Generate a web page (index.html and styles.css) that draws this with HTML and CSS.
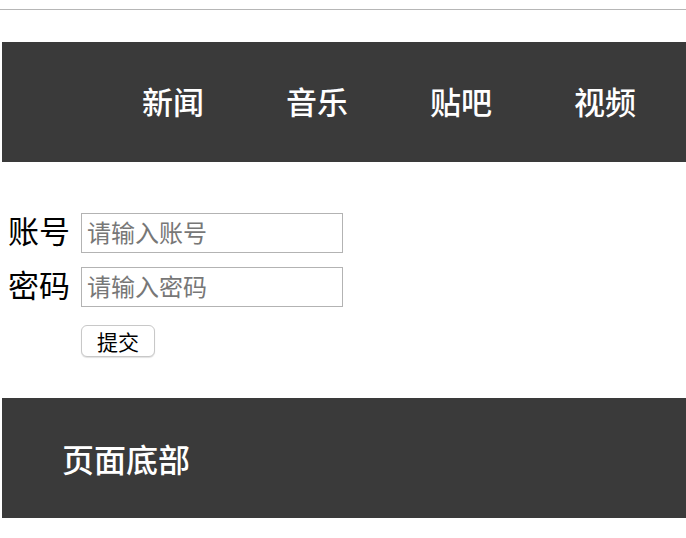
FILE: index.html
```html
<!DOCTYPE html>
<html lang="zh">
<head>
<meta charset="utf-8">
<title>页面</title>
<link rel="stylesheet" href="styles.css">
</head>
<body>
<div class="rule"></div>
<header class="header">
  <ul class="nav">
    <li class="nav-item">新闻</li>
    <li class="nav-item">音乐</li>
    <li class="nav-item">贴吧</li>
    <li class="nav-item">视频</li>
  </ul>
</header>
<form class="form">
  <div class="row">
    <label class="label">账号</label>
    <input class="field" type="text" placeholder="请输入账号">
  </div>
  <div class="row">
    <label class="label">密码</label>
    <input class="field" type="password" placeholder="请输入密码">
  </div>
  <div class="row actions">
    <button class="submit" type="button">提交</button>
  </div>
</form>
<footer class="footer">页面底部</footer>
</body>
</html>
```
FILE: styles.css
```css
* { box-sizing: border-box; }
html, body {
  margin: 0;
  padding: 0;
  background: #fff;
  font-family: "Noto Sans CJK SC", "Noto Sans", sans-serif;
  overflow: hidden;
}
.rule {
  margin-top: 9px;
  height: 1px;
  background: #b6b6b6;
}
.header {
  margin: 32px 0 0 2px;
  height: 120px;
  background: #3a3a3a;
  display: flex;
  align-items: center;
}
.nav {
  list-style: none;
  margin: 0;
  padding: 0 0 2px 99px;
  display: flex;
}
.nav-item {
  width: 144px;
  text-align: center;
  color: #fff;
  font-size: 31px;
  font-weight: 500;
  line-height: 40px;
}
.form {
  margin: 51px 0 0 0;
  padding-left: 8px;
  display: flex;
  flex-direction: column;
  gap: 14px;
}
.row {
  display: flex;
  align-items: center;
  gap: 10px;
}
.label {
  width: 63px;
  height: 40px;
  font-size: 31px;
  line-height: 34px;
  color: #000;
}
.field {
  width: 262px;
  height: 40px;
  border: 1px solid #b3b3b3;
  padding: 0 5px 4px 5px;
  font-family: inherit;
  font-size: 24px;
  color: #000;
  outline: none;
  margin: 0;
}
.field::placeholder { color: #777; }
.actions {
  padding-left: 73px;
  margin-top: 4px;
}
.submit {
  width: 74px;
  height: 32px;
  border: 1px solid #c8c8c8;
  border-radius: 6px;
  background: #fff;
  font-family: inherit;
  font-size: 21px;
  color: #000;
  padding: 0;
  box-shadow: 0 1px 1px rgba(0,0,0,0.12);
  line-height: 28px;
}
.footer {
  margin: 41px 0 0 2px;
  height: 120px;
  background: #3a3a3a;
  color: #fff;
  font-size: 32px;
  font-weight: 500;
  padding-left: 60px;
  display: flex;
  align-items: center;
}
```
